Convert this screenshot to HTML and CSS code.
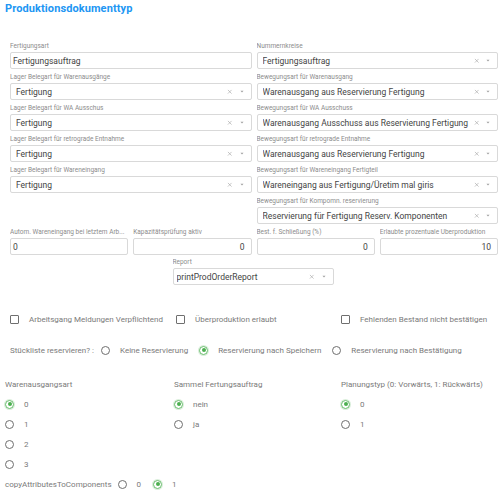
FILE: index.html
```html
<!DOCTYPE html>
<html lang="de">
<head>
<meta charset="utf-8">
<title>Produktionsdokumenttyp</title>
<link rel="stylesheet" href="styles.css">
</head>
<body>
<div class="page">
  <h1 class="title">Produktionsdokumenttyp</h1>

  <div class="fields">
    <div class="field">
      <label>Fertigungsart</label>
      <div class="box plain">Fertigungsauftrag</div>
    </div>
    <div class="field">
      <label>Nummernkreise</label>
      <div class="box"><span class="val">Fertigungsauftrag</span><span class="icons"><svg class="ix" viewBox="0 0 6 6"><path d="M1 1L5 5M5 1L1 5"/></svg><svg class="ia" viewBox="0 0 4 3"><path d="M0.5 0.8H3.5L2 2.4Z"/></svg></span></div>
    </div>

    <div class="field">
      <label>Lager Belegart für Warenausgänge</label>
      <div class="box"><span class="val">Fertigung</span><span class="icons"><svg class="ix" viewBox="0 0 6 6"><path d="M1 1L5 5M5 1L1 5"/></svg><svg class="ia" viewBox="0 0 4 3"><path d="M0.5 0.8H3.5L2 2.4Z"/></svg></span></div>
    </div>
    <div class="field">
      <label>Bewegungsart für Warenausgang</label>
      <div class="box"><span class="val">Warenausgang aus Reservierung Fertigung</span><span class="icons"><svg class="ix" viewBox="0 0 6 6"><path d="M1 1L5 5M5 1L1 5"/></svg><svg class="ia" viewBox="0 0 4 3"><path d="M0.5 0.8H3.5L2 2.4Z"/></svg></span></div>
    </div>

    <div class="field">
      <label>Lager Belegart für WA Ausschus</label>
      <div class="box"><span class="val">Fertigung</span><span class="icons"><svg class="ix" viewBox="0 0 6 6"><path d="M1 1L5 5M5 1L1 5"/></svg><svg class="ia" viewBox="0 0 4 3"><path d="M0.5 0.8H3.5L2 2.4Z"/></svg></span></div>
    </div>
    <div class="field">
      <label>Bewegungsart für WA Ausschuss</label>
      <div class="box"><span class="val">Warenausgang Ausschuss aus Reservierung Fertigung</span><span class="icons"><svg class="ix" viewBox="0 0 6 6"><path d="M1 1L5 5M5 1L1 5"/></svg><svg class="ia" viewBox="0 0 4 3"><path d="M0.5 0.8H3.5L2 2.4Z"/></svg></span></div>
    </div>

    <div class="field">
      <label>Lager Belegart für retrograde Entnahme</label>
      <div class="box"><span class="val">Fertigung</span><span class="icons"><svg class="ix" viewBox="0 0 6 6"><path d="M1 1L5 5M5 1L1 5"/></svg><svg class="ia" viewBox="0 0 4 3"><path d="M0.5 0.8H3.5L2 2.4Z"/></svg></span></div>
    </div>
    <div class="field">
      <label>Bewegungsart für retrograde Entnahme</label>
      <div class="box"><span class="val">Warenausgang aus Reservierung Fertigung</span><span class="icons"><svg class="ix" viewBox="0 0 6 6"><path d="M1 1L5 5M5 1L1 5"/></svg><svg class="ia" viewBox="0 0 4 3"><path d="M0.5 0.8H3.5L2 2.4Z"/></svg></span></div>
    </div>

    <div class="field">
      <label>Lager Belegart für Wareneingang</label>
      <div class="box"><span class="val">Fertigung</span><span class="icons"><svg class="ix" viewBox="0 0 6 6"><path d="M1 1L5 5M5 1L1 5"/></svg><svg class="ia" viewBox="0 0 4 3"><path d="M0.5 0.8H3.5L2 2.4Z"/></svg></span></div>
    </div>
    <div class="field">
      <label>Bewegungsart für Wareneingang Fertigteil</label>
      <div class="box"><span class="val">Wareneingang aus Fertigung/Üretim mal giris</span><span class="icons"><svg class="ix" viewBox="0 0 6 6"><path d="M1 1L5 5M5 1L1 5"/></svg><svg class="ia" viewBox="0 0 4 3"><path d="M0.5 0.8H3.5L2 2.4Z"/></svg></span></div>
    </div>

    <div class="field col2">
      <label>Bewegungsart für Kompomn. reservierung</label>
      <div class="box"><span class="val">Reservierung für Fertigung Reserv. Komponenten</span><span class="icons"><svg class="ix" viewBox="0 0 6 6"><path d="M1 1L5 5M5 1L1 5"/></svg><svg class="ia" viewBox="0 0 4 3"><path d="M0.5 0.8H3.5L2 2.4Z"/></svg></span></div>
    </div>
  </div>

  <div class="numbers">
    <div class="field">
      <label>Autom. Wareneingang bei letztem Arb...</label>
      <div class="box plain">0</div>
    </div>
    <div class="field">
      <label>Kapazitätsprüfung aktiv</label>
      <div class="box num">0</div>
    </div>
    <div class="field">
      <label>Best. f. Schließung (%)</label>
      <div class="box num">0</div>
    </div>
    <div class="field">
      <label>Erlaubte prozentuale Überproduktion</label>
      <div class="box num">10</div>
    </div>
  </div>

  <div class="report">
    <div class="field">
      <label>Report</label>
      <div class="box small-pad"><span class="val">printProdOrderReport</span><span class="icons"><svg class="ix" viewBox="0 0 6 6"><path d="M1 1L5 5M5 1L1 5"/></svg><svg class="ia" viewBox="0 0 4 3"><path d="M0.5 0.8H3.5L2 2.4Z"/></svg></span></div>
    </div>
  </div>

  <div class="checks">
    <div class="check"><span class="cb"></span><span>Arbeitsgang Meldungen Verpflichtend</span></div>
    <div class="check"><span class="cb"></span><span>Überproduktion erlaubt</span></div>
    <div class="check"><span class="cb"></span><span>Fehlenden Bestand nicht bestätigen</span></div>
  </div>

  <div class="stueck">
    <span class="q">Stückliste reservieren? :</span>
    <span class="opt"><span class="radio"></span><span>Keine Reservierung</span></span>
    <span class="opt"><span class="radio on"></span><span>Reservierung nach Speichern</span></span>
    <span class="opt"><span class="radio"></span><span>Reservierung nach Bestätigung</span></span>
  </div>

  <div class="groups">
    <div class="group">
      <div class="ghead">Warenausgangsart</div>
      <div class="grow"><span class="radio on"></span><span>0</span></div>
      <div class="grow"><span class="radio"></span><span>1</span></div>
      <div class="grow"><span class="radio"></span><span>2</span></div>
      <div class="grow"><span class="radio"></span><span>3</span></div>
    </div>
    <div class="group">
      <div class="ghead">Sammel Fertungsauftrag</div>
      <div class="grow"><span class="radio on"></span><span>nein</span></div>
      <div class="grow"><span class="radio"></span><span>ja</span></div>
    </div>
    <div class="group">
      <div class="ghead">Planungstyp (0: Vorwärts, 1: Rückwärts)</div>
      <div class="grow"><span class="radio on"></span><span>0</span></div>
      <div class="grow"><span class="radio"></span><span>1</span></div>
    </div>
  </div>

  <div class="copy">
    <span class="q">copyAttributesToComponents</span>
    <span class="opt"><span class="radio"></span><span>0</span></span>
    <span class="opt"><span class="radio on"></span><span>1</span></span>
  </div>
</div>
</body>
</html>
```
FILE: styles.css
```css
html, body {
  margin: 0;
  padding: 0;
  background: #ffffff;
}

body {
  font-family: Roboto, "Liberation Sans", sans-serif;
  color: #333333;
}

.page {
  width: 502px;
  height: 500px;
  overflow: hidden;
}

.title {
  margin: 0;
  padding: 2px 5px 0;
  font-size: 11px;
  line-height: 14px;
  font-weight: 700;
  color: #2196f3;
  letter-spacing: 0.1px;
}

.fields {
  display: grid;
  grid-template-columns: 1fr 1fr;
  column-gap: 5px;
  row-gap: 4px;
  margin-top: 26px;
  padding: 0 4px 0 10px;
}

.col2 {
  grid-column: 2;
}

.field {
  min-width: 0;
}

.field label {
  display: block;
  font-size: 6.5px;
  line-height: 9px;
  margin-bottom: 1px;
  color: #8c8c8c;
  white-space: nowrap;
  overflow: hidden;
}

.box {
  box-sizing: border-box;
  height: 17px;
  border: 1px solid #d9d9d9;
  border-radius: 2px;
  display: flex;
  align-items: center;
  padding: 0 4px 0 5px;
  font-size: 8.5px;
  color: #444444;
  white-space: nowrap;
}

.box.plain {
  padding-left: 2px;
}

.box.num {
  justify-content: flex-end;
  padding-right: 6px;
}

.box.small-pad {
  padding-left: 3px;
}

.val {
  flex: 1;
  overflow: hidden;
}

.icons {
  display: flex;
  align-items: center;
  gap: 7px;
  margin-right: 3px;
}

.ix {
  width: 5.5px;
  height: 5.5px;
  fill: none;
  stroke: #a8a8a8;
  stroke-width: 0.7;
}

.ia {
  width: 4px;
  height: 3px;
  fill: #a0a0a0;
}

.numbers {
  display: grid;
  grid-template-columns: repeat(4, 1fr);
  column-gap: 5px;
  margin-top: 4px;
  padding: 0 4px 0 10px;
}

.report {
  display: flex;
  justify-content: center;
  margin-top: 3px;
  padding-left: 4px;
}

.report .field {
  width: 161px;
}

.checks {
  display: grid;
  grid-template-columns: 166px 165px 1fr;
  align-items: center;
  height: 14px;
  margin-top: 27px;
  padding-left: 10px;
  font-size: 8px;
  color: #7a7a7a;
}

.check {
  display: flex;
  align-items: center;
  gap: 10px;
  white-space: nowrap;
}

.cb {
  box-sizing: border-box;
  width: 9px;
  height: 9px;
  border: 1px solid #6f6f6f;
  border-radius: 1px;
  flex: none;
}

.stueck {
  display: flex;
  align-items: center;
  height: 14px;
  margin-top: 17px;
  padding-left: 10px;
  font-size: 8px;
  color: #7a7a7a;
  white-space: nowrap;
}

.stueck .q {
  margin-right: 7px;
}

.opt {
  display: flex;
  align-items: center;
  gap: 10px;
  margin-right: 11px;
}

.radio {
  box-sizing: border-box;
  width: 9px;
  height: 9px;
  border: 1px solid #6f6f6f;
  border-radius: 50%;
  flex: none;
  position: relative;
}

.radio.on {
  border-color: #66bb6a;
  box-shadow: 0 0 0 1px rgba(102, 187, 106, 0.25);
}

.radio.on::after {
  content: "";
  position: absolute;
  left: 1.5px;
  top: 1.5px;
  width: 4px;
  height: 4px;
  border-radius: 50%;
  background: #4caf50;
}

.groups {
  display: grid;
  grid-template-columns: 169px 167px 1fr;
  margin-top: 21px;
  padding-left: 5px;
  font-size: 8px;
  color: #7a7a7a;
}

.ghead {
  height: 14px;
  line-height: 14px;
  margin-bottom: 2px;
  white-space: nowrap;
}

.grow {
  display: flex;
  align-items: center;
  gap: 10px;
  height: 20px;
}

.copy {
  display: flex;
  align-items: center;
  height: 20px;
  padding-left: 5px;
  font-size: 8px;
  color: #7a7a7a;
  white-space: nowrap;
}

.copy .q {
  margin-right: 6px;
}

.copy .opt {
  margin-right: 12px;
}
```
